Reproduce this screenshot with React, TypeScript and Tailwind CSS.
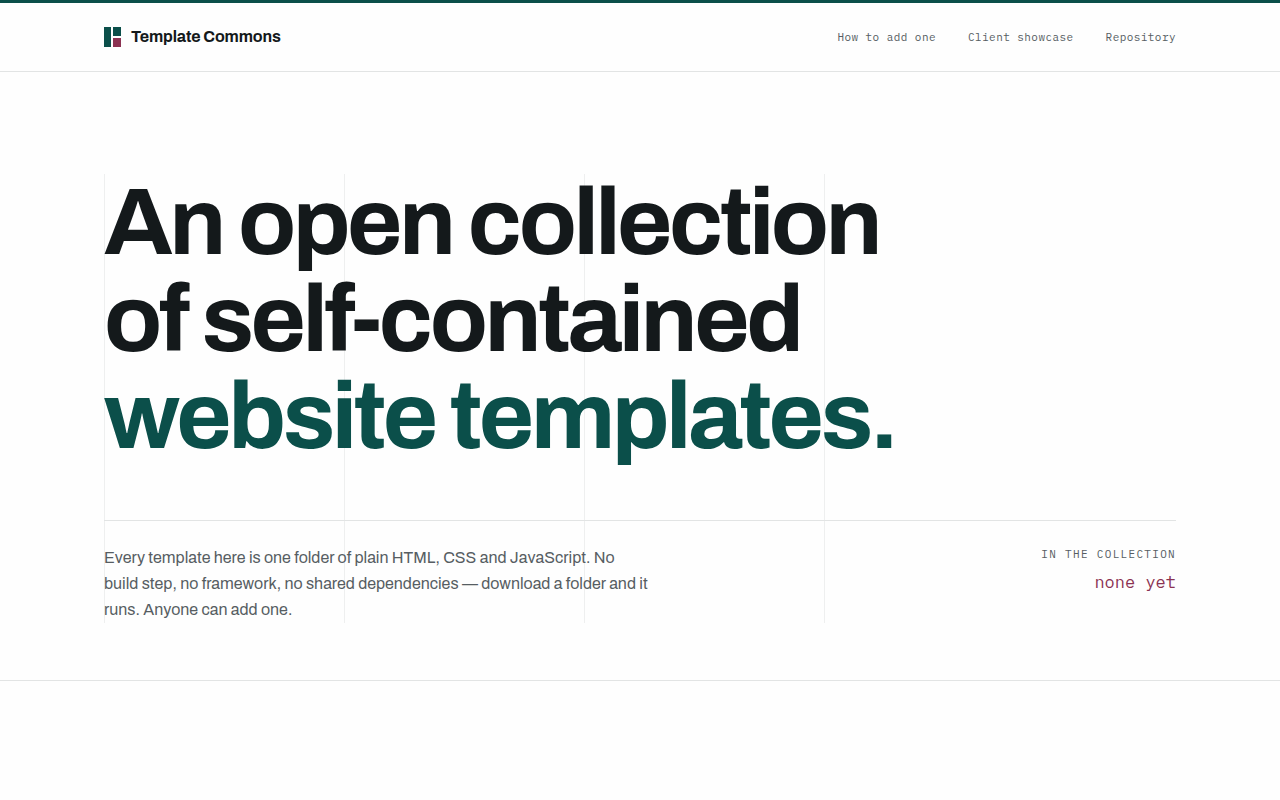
const links = ["How to add one", "Client showcase", "Repository"];

export default function App() {
  return (
    <div className="min-h-screen border-t-3 border-[#0b4f4a] bg-[#fefefe] font-['Archivo','Liberation_Sans',sans-serif] text-[#14191b]">
      <header className="border-b border-[#e2e4e4]">
        <div className="mx-auto flex min-h-17 max-w-[1120px] flex-wrap items-center justify-between gap-x-8 px-6">
          <a href="#" className="flex items-center gap-2.5 text-base font-bold tracking-[-0.01em]">
            <svg width="17" height="20" viewBox="0 0 17 20" aria-hidden="true">
              <rect width="7" height="20" fill="#0b4f4a" />
              <rect x="9" width="8" height="9" fill="#0b4f4a" />
              <rect x="9" y="11" width="8" height="9" fill="#8b3252" />
            </svg>
            Template Commons
          </a>
          <nav className="flex gap-8 font-['IBM_Plex_Mono','Liberation_Mono',monospace] text-[11px] leading-4 tracking-[0.04em] text-[#565d62]">
            {links.map((l) => (
              <a key={l} href="#">{l}</a>
            ))}
          </nav>
        </div>
      </header>
      <main className="border-b border-[#e2e4e4] pt-[102px] pb-[57px]">
        <div className="mx-auto max-w-[1120px] px-6">
          <div className="bg-[repeating-linear-gradient(to_right,#eeefef_0,#eeefef_1px,transparent_1px,transparent_240px)] bg-size-[960px_100%] bg-no-repeat">
            <h1 className="text-[95px] leading-[97px] font-bold tracking-[-0.037em]">
              An open collection<br />of self-contained<br />
              <span className="text-[#0b4f4a]">website templates.</span>
            </h1>
            <div className="mt-[55px] flex justify-between gap-8 border-t border-[#e2e4e4] pt-6">
              <p className="max-w-[544px] text-base leading-[26px] text-[#565d62]">
                Every template here is one folder of plain HTML, CSS and JavaScript. No build step, no framework, no shared dependencies — download a folder and it runs. Anyone can add one.
              </p>
              <div className="text-right font-['IBM_Plex_Mono','Liberation_Mono',monospace]">
                <p className="text-[11px] leading-[18px] tracking-[0.12em] text-[#565d62] uppercase">In the collection</p>
                <p className="mt-1.5 text-[17px] leading-[26px] text-[#8b3252]">none yet</p>
              </div>
            </div>
          </div>
        </div>
      </main>
    </div>
  );
}
